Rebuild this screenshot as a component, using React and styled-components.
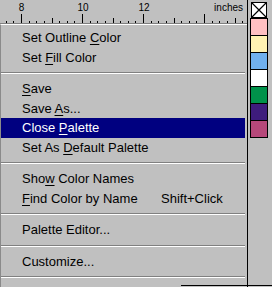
import React from "react";
import styled, { createGlobalStyle } from "styled-components";

const GlobalStyle = createGlobalStyle`
  html, body {
    margin: 0;
    padding: 0;
    background: #c0c0c0;
  }
  body {
    width: 272px;
    height: 287px;
    overflow: hidden;
    font-family: "Liberation Sans", Arial, sans-serif;
  }
`;

const Screen = styled.div`
  position: relative;
  display: flex;
  width: 272px;
  height: 287px;
  background: #c0c0c0;
  overflow: hidden;
`;

const Main = styled.div`
  display: flex;
  flex-direction: column;
  width: 247px;
  flex: none;
`;

const RulerBar = styled.svg`
  display: block;
  flex: none;
  border-bottom: 1px solid #808080;
`;

const Menu = styled.ul`
  flex: 1;
  list-style: none;
  margin: 0;
  padding: 3px 2px 0 0;
  border-top: 1px solid #ffffff;
  border-left: 1px solid #8a8a8a;
`;

const Item = styled.li`
  display: flex;
  height: 19.5px;
  line-height: 19.5px;
  padding-left: 21px;
  font-size: 13px;
  white-space: nowrap;
  color: ${(p) => (p.$active ? "#ffffff" : "#000000")};
  background: ${(p) => (p.$active ? "#000080" : "transparent")};
`;

const Label = styled.span`
  width: 139px;
  flex: none;
`;

const Key = styled.span`
  flex: none;
`;

const Mn = styled.span`
  text-decoration: underline;
  text-underline-offset: 2px;
`;

const Separator = styled.li`
  height: 12px;
  padding: 5px 0;
  box-sizing: border-box;

  &::after {
    content: "";
    display: block;
    border-top: 1px solid #808080;
    border-bottom: 1px solid #ffffff;
  }
`;

const Palette = styled.div`
  flex: 1;
  display: flex;
  flex-direction: column;
  border-left: 1px solid #000000;
  padding-left: 2px;
`;

const NoColor = styled.svg`
  display: block;
  margin: 2px 0 0 1px;
`;

const Swatch = styled.div`
  width: 18px;
  height: 17px;
  box-sizing: border-box;
  border: 1px solid #000000;
  border-bottom: none;
  background: ${(p) => p.$color};

  &:last-child {
    height: 18px;
    border-bottom: 1px solid #000000;
  }
`;

const Swatches = styled.div`
  display: flex;
  flex-direction: column;
`;

const EdgeLine = styled.div`
  position: absolute;
  left: 181px;
  top: 285px;
  width: 91px;
  height: 1px;
  background: #000000;
`;

const colors = ["#ffc0c2", "#fff2b2", "#70b0ee", "#ffffff", "#00924a", "#3e1c7c", "#b6487a"];

function Ruler() {
  const step = 61 / 8;
  const ticks = [];
  for (let i = -2; i < 31; i++) {
    const x = Math.round(21 + i * step) + 0.5;
    if (x < 0 || x > 247) continue;
    const mod = ((i % 8) + 8) % 8;
    const top = mod === 0 ? 14 : mod === 4 ? 18 : 21;
    ticks.push(<line key={i} x1={x} x2={x} y1={top} y2={23} stroke="#000" strokeWidth="1" />);
  }
  return (
    <RulerBar width="247" height="23" viewBox="0 0 247 23">
      <rect width="247" height="23" fill="#c0c0c0" />
      {ticks}
      <g fontFamily="Liberation Sans, Arial, sans-serif" fontSize="10" fill="#000">
        <text x="21.5" y="11" textAnchor="middle">8</text>
        <text x="83" y="11" textAnchor="middle">10</text>
        <text x="144" y="11" textAnchor="middle">12</text>
        <text x="243" y="11" textAnchor="end">inches</text>
      </g>
    </RulerBar>
  );
}

export default function App() {
  return (
    <Screen>
      <GlobalStyle />
      <Main>
        <Ruler />
        <Menu>
          <Item><Label>Set Outline <Mn>C</Mn>olor</Label></Item>
          <Item><Label>Set <Mn>F</Mn>ill Color</Label></Item>
          <Separator />
          <Item><Label><Mn>S</Mn>ave</Label></Item>
          <Item><Label>Save <Mn>A</Mn>s...</Label></Item>
          <Item $active><Label>Close <Mn>P</Mn>alette</Label></Item>
          <Item><Label>Set As <Mn>D</Mn>efault Palette</Label></Item>
          <Separator />
          <Item><Label>Sho<Mn>w</Mn> Color Names</Label></Item>
          <Item><Label><Mn>F</Mn>ind Color by Name</Label><Key>Shift+Click</Key></Item>
          <Separator />
          <Item><Label>Palette Editor...</Label></Item>
          <Separator />
          <Item><Label>Customize...</Label></Item>
          <Separator />
        </Menu>
      </Main>
      <Palette>
        <NoColor width="16" height="16" viewBox="0 0 16 16">
          <rect x="0.5" y="0.5" width="15" height="15" fill="#fff" stroke="#000" />
          <path d="M1 1 L15 15 M15 1 L1 15" stroke="#000" strokeWidth="1.2" />
        </NoColor>
        <Swatches>
          {colors.map((c) => (
            <Swatch key={c} $color={c} />
          ))}
        </Swatches>
      </Palette>
      <EdgeLine />
    </Screen>
  );
}
